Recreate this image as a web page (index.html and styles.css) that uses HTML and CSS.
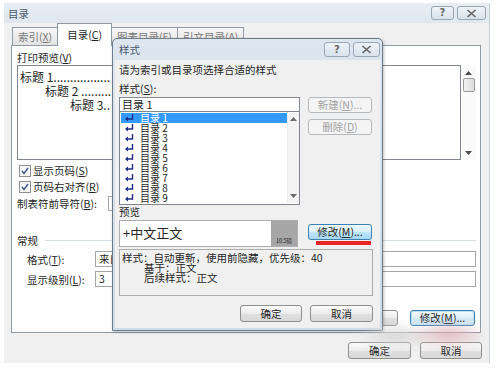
FILE: index.html
```html
<!DOCTYPE html>
<html lang="zh-CN">
<head>
    <meta charset="UTF-8">
    <title>目录</title>
    <link rel="stylesheet" href="styles.css">
</head>
<body>
    <div class="window">
        <div class="titlebar">
            <span class="title">目录</span>
            <div class="caption-buttons">
                <span class="cap-btn help">?</span>
                <span class="cap-btn close">
                    <svg width="11" height="9" viewBox="0 0 11 9"><path d="M1.5 1 L9.5 8 M9.5 1 L1.5 8" stroke="#666" stroke-width="1.6" fill="none"/></svg>
                </span>
            </div>
        </div>

        <div class="tabs">
            <div class="tab">索引(<u>X</u>)</div>
            <div class="tab active">目录(<u>C</u>)</div>
            <div class="tab">图表目录(<u>F</u>)</div>
            <div class="tab">引文目录(<u>A</u>)</div>
        </div>

        <div class="panel">
            <div class="panel-top">
                <div class="col-left">
                    <div class="label">打印预览(<u>V</u>)</div>
                    <div class="print-box">
                        <div class="toc-line">标题 1.................</div>
                        <div class="toc-line lv2">标题 2 .........</div>
                        <div class="toc-line lv3">标题 3..</div>
                    </div>
                    <div class="check">
                        <svg width="12" height="12" viewBox="0 0 12 12"><rect x="0.5" y="0.5" width="11" height="11" fill="#f4f6f8" stroke="#8e8f8f"/><path d="M3 6 L5 8.5 L9 3" fill="none" stroke="#4a5f87" stroke-width="1.6"/></svg>
                        <span>显示页码(<u>S</u>)</span>
                    </div>
                    <div class="check second">
                        <svg width="12" height="12" viewBox="0 0 12 12"><rect x="0.5" y="0.5" width="11" height="11" fill="#f4f6f8" stroke="#8e8f8f"/><path d="M3 6 L5 8.5 L9 3" fill="none" stroke="#4a5f87" stroke-width="1.6"/></svg>
                        <span>页码右对齐(<u>R</u>)</span>
                    </div>
                    <div class="leader">
                        <span class="leader-label">制表符前导符(<u>B</u>):</span>
                        <span class="combo"></span>
                    </div>
                </div>
                <div class="col-right">
                    <div class="label"></div>
                    <div class="web-wrap">
                        <div class="web-box"></div>
                        <div class="web-scroll">
                            <svg width="7" height="4" viewBox="0 0 7 4"><path d="M0 4 L3.5 0 L7 4Z" fill="#4d4d4d"/></svg>
                            <span class="thumb"></span>
                            <span class="spacer"></span>
                            <svg width="7" height="4" viewBox="0 0 7 4"><path d="M0 0 L3.5 4 L7 0Z" fill="#4d4d4d"/></svg>
                        </div>
                    </div>
                </div>
            </div>

            <div class="group-head"><span>常规</span><span class="rule"></span></div>
            <div class="field">
                <span class="field-label">格式(<u>T</u>):</span>
                <span class="combo">来自</span>
            </div>
            <div class="field">
                <span class="field-label">显示级别(<u>L</u>):</span>
                <span class="combo spin">3</span>
            </div>

            <div class="panel-buttons">
                <button class="btn options"></button>
                <button class="btn focused modify-outer">修改(<u>M</u>)...</button>
            </div>
        </div>

        <div class="dialog-buttons">
            <button class="btn ok-outer">确定</button>
            <button class="btn cancel-outer">取消</button>
        </div>
    </div>

    <div class="modal">
        <div class="modal-title">
            <span class="title">样式</span>
            <div class="caption-buttons">
                <span class="cap-btn help wide">?</span>
                <span class="cap-btn close wide">
                    <svg width="11" height="9" viewBox="0 0 11 9"><path d="M1.5 1 L9.5 8 M9.5 1 L1.5 8" stroke="#666" stroke-width="1.6" fill="none"/></svg>
                </span>
            </div>
        </div>
        <div class="modal-body">
            <div class="hint">请为索引或目录项选择合适的样式</div>
            <div class="label gap">样式(<u>S</u>):</div>
            <div class="style-main">
                <div class="style-pick">
                    <div class="style-input">目录 1</div>
                    <div class="style-list">
                        <div class="style-rows">
                            <div class="style-row selected"><svg class="ret" width="9" height="8" viewBox="0 0 9 8"><path d="M7.5 0 V5 H2.5" stroke="#1f2d86" stroke-width="1.4" fill="none"/><path d="M0 5 L3 2.5 L3 7.5Z" fill="#1f2d86"/></svg><span>目录 1</span></div>
                            <div class="style-row"><svg class="ret" width="9" height="8" viewBox="0 0 9 8"><path d="M7.5 0 V5 H2.5" stroke="#1f2d86" stroke-width="1.4" fill="none"/><path d="M0 5 L3 2.5 L3 7.5Z" fill="#1f2d86"/></svg><span>目录 2</span></div>
                            <div class="style-row"><svg class="ret" width="9" height="8" viewBox="0 0 9 8"><path d="M7.5 0 V5 H2.5" stroke="#1f2d86" stroke-width="1.4" fill="none"/><path d="M0 5 L3 2.5 L3 7.5Z" fill="#1f2d86"/></svg><span>目录 3</span></div>
                            <div class="style-row"><svg class="ret" width="9" height="8" viewBox="0 0 9 8"><path d="M7.5 0 V5 H2.5" stroke="#1f2d86" stroke-width="1.4" fill="none"/><path d="M0 5 L3 2.5 L3 7.5Z" fill="#1f2d86"/></svg><span>目录 4</span></div>
                            <div class="style-row"><svg class="ret" width="9" height="8" viewBox="0 0 9 8"><path d="M7.5 0 V5 H2.5" stroke="#1f2d86" stroke-width="1.4" fill="none"/><path d="M0 5 L3 2.5 L3 7.5Z" fill="#1f2d86"/></svg><span>目录 5</span></div>
                            <div class="style-row"><svg class="ret" width="9" height="8" viewBox="0 0 9 8"><path d="M7.5 0 V5 H2.5" stroke="#1f2d86" stroke-width="1.4" fill="none"/><path d="M0 5 L3 2.5 L3 7.5Z" fill="#1f2d86"/></svg><span>目录 6</span></div>
                            <div class="style-row"><svg class="ret" width="9" height="8" viewBox="0 0 9 8"><path d="M7.5 0 V5 H2.5" stroke="#1f2d86" stroke-width="1.4" fill="none"/><path d="M0 5 L3 2.5 L3 7.5Z" fill="#1f2d86"/></svg><span>目录 7</span></div>
                            <div class="style-row"><svg class="ret" width="9" height="8" viewBox="0 0 9 8"><path d="M7.5 0 V5 H2.5" stroke="#1f2d86" stroke-width="1.4" fill="none"/><path d="M0 5 L3 2.5 L3 7.5Z" fill="#1f2d86"/></svg><span>目录 8</span></div>
                            <div class="style-row"><svg class="ret" width="9" height="8" viewBox="0 0 9 8"><path d="M7.5 0 V5 H2.5" stroke="#1f2d86" stroke-width="1.4" fill="none"/><path d="M0 5 L3 2.5 L3 7.5Z" fill="#1f2d86"/></svg><span>目录 9</span></div>
                        </div>
                        <div class="list-scroll">
                            <svg width="7" height="4" viewBox="0 0 7 4"><path d="M0 4 L3.5 0 L7 4Z" fill="#6b6b6b"/></svg>
                            <svg width="7" height="4" viewBox="0 0 7 4"><path d="M0 0 L3.5 4 L7 0Z" fill="#6b6b6b"/></svg>
                        </div>
                    </div>
                </div>
                <div class="side-buttons">
                    <button class="btn" disabled>新建(<u>N</u>)...</button>
                    <button class="btn delete" disabled>删除(<u>D</u>)</button>
                </div>
            </div>

            <div class="label">预览</div>
            <div class="preview-row">
                <div class="preview-box">
                    <span class="preview-text">+中文正文</span>
                    <span class="size-chip">10.5磅</span>
                </div>
                <div class="modify-wrap">
                    <button class="btn hovered">修改(<u>M</u>)...</button>
                    <span class="red-mark"></span>
                </div>
            </div>

            <div class="desc">
                <div>样式：自动更新，使用前隐藏，优先级：40</div>
                <div class="sub">基于：正文</div>
                <div class="sub">后续样式：正文</div>
            </div>

            <div class="modal-actions">
                <button class="btn ok">确定</button>
                <button class="btn cancel">取消</button>
            </div>
        </div>
    </div>

    <div class="watermark"></div>
</body>
</html>
```

FILE: styles.css
```css
* {
    margin: 0;
    padding: 0;
    box-sizing: border-box;
}

body {
    background: #fff;
    color: #262626;
    font-family: "Noto Sans CJK SC", "Noto Sans", sans-serif;
    font-size: 10.5px;
}

u {
    text-decoration: underline;
}

/* outer dialog */
.window {
    width: 486px;
    height: 360px;
    margin: 3px 0 0 4px;
    background: #f0f0f0;
    border-right: 1px solid #c9cfd6;
    display: flex;
    flex-direction: column;
}

.titlebar {
    height: 20px;
    flex: none;
    display: flex;
    align-items: center;
    justify-content: space-between;
    padding: 0 3px 0 4px;
    background: linear-gradient(#e8eef4, #dfe6ee);
    color: #4a5a6a;
}

.caption-buttons {
    display: flex;
    gap: 3px;
}

.cap-btn {
    width: 23px;
    height: 14px;
    border: 1px solid #9aa7b4;
    border-radius: 3px;
    background: linear-gradient(#eef3f8, #d9e2eb);
    display: flex;
    align-items: center;
    justify-content: center;
    color: #6a6a6a;
    font-family: "DejaVu Sans", sans-serif;
    font-size: 10px;
    font-weight: bold;
    line-height: 1;
}

.cap-btn.close {
    width: 29px;
}

.cap-btn.wide {
    width: 26px;
    height: 15px;
}

.cap-btn.close.wide {
    width: 27px;
}

.tabs {
    height: 22px;
    flex: none;
    display: flex;
    align-items: flex-end;
    padding-left: 8px;
}

.tab {
    height: 18px;
    line-height: 17px;
    padding: 0 5px;
    border: 1px solid #8f9aa6;
    border-bottom: none;
    background: linear-gradient(#f6f6f6, #e3e3e3);
    color: #7a7a7a;
    margin-right: -1px;
}

.tab.active {
    height: 23px;
    line-height: 21px;
    margin: 0 -1px -1px 0;
    padding: 0 9px;
    background: #fff;
    color: #262626;
    position: relative;
    z-index: 2;
}

.panel {
    height: 288px;
    flex: none;
    margin: 0 8px 0 7px;
    background: #fff;
    border: 1px solid #8f9aa6;
    padding: 5px 4px 6px 5px;
    display: flex;
    flex-direction: column;
}

.panel-top {
    display: flex;
    gap: 14px;
}

.col-left {
    width: 213px;
}

.col-right {
    width: 232px;
}

.label {
    height: 13px;
    line-height: 13px;
    white-space: nowrap;
}

.print-box {
    margin-top: 1px;
    height: 95px;
    border: 1px solid #828790;
    padding: 4px 0 0 2px;
}

.toc-line {
    font-size: 12px;
    line-height: 14px;
    white-space: nowrap;
}

.toc-line.lv2 {
    margin-left: 25px;
}

.toc-line.lv3 {
    margin-left: 50px;
}

.check {
    height: 13px;
    margin-top: 4px;
    padding-left: 2px;
    display: flex;
    align-items: center;
    gap: 2px;
}

.check.second {
    margin-top: 3px;
}

.leader {
    height: 15px;
    margin-top: 3px;
    display: flex;
    align-items: center;
}

.leader-label {
    width: 91px;
    flex: none;
}

.combo {
    flex: 1;
    height: 15px;
    line-height: 13px;
    padding-left: 3px;
    border: 1px solid #a6a6a6;
    background: #fff;
    white-space: nowrap;
}

.web-wrap {
    margin-top: 1px;
    height: 95px;
    display: flex;
}

.web-box {
    flex: 1;
    border: 1px solid #828790;
}

.web-scroll {
    width: 15px;
    display: flex;
    flex-direction: column;
    align-items: center;
    padding: 6px 0 5px;
    background: #fafafa;
}

.web-scroll .thumb {
    width: 12px;
    height: 14px;
    margin-top: 3px;
    border: 1px solid #9b9b9b;
    border-radius: 2px;
    background: linear-gradient(90deg, #f2f2f2, #dcdcdc);
}

.web-scroll .spacer {
    flex: 1;
}

.group-head {
    height: 13px;
    margin-top: 23px;
    line-height: 13px;
    display: flex;
    align-items: center;
}

.group-head .rule {
    flex: 1;
    margin-left: 7px;
    border-top: 1px solid #d5dde5;
}

.field {
    height: 16px;
    margin-top: 4px;
    padding-left: 10px;
    display: flex;
    align-items: center;
}

.field-label {
    width: 68px;
    flex: none;
}

.field .combo {
    height: 16px;
    line-height: 14px;
}

.panel-buttons {
    margin-top: auto;
    display: flex;
    justify-content: flex-end;
    gap: 12px;
    padding-right: 1px;
}

.dialog-buttons {
    margin-top: 9px;
    padding-right: 7px;
    display: flex;
    justify-content: flex-end;
    gap: 9px;
}

/* buttons */
.btn {
    height: 16px;
    padding: 0;
    border: 1px solid #8e8f8f;
    border-radius: 3px;
    background: linear-gradient(#fbfbfb, #ececec 50%, #e0e0e0 51%, #d8d8d8);
    color: #262626;
    font-family: inherit;
    font-size: 10.5px;
    line-height: 14px;
}

.btn:disabled {
    color: #a3a3a3;
    border-color: #b5b9bc;
    background: #f4f4f4;
}

.btn.focused {
    border-color: #3c7fb1;
    box-shadow: inset 0 0 0 1px #bde3f7;
    background: linear-gradient(#f2f9fd, #e0f0fb 50%, #d4eaf8 51%, #cfe6f6);
}

.btn.hovered {
    border-color: #3c7fb1;
    background: linear-gradient(#eaf6fd, #d9f0fc 50%, #bee6fd 51%, #a7d9f5);
}

.options {
    width: 63px;
}

.modify-outer {
    width: 65px;
}

.ok-outer,
.cancel-outer {
    width: 63px;
    height: 17px;
}

.cancel-outer {
    width: 62px;
}

/* style dialog lying over the outer one */
.modal {
    position: absolute;
    left: 112px;
    top: 38px;
    width: 271px;
    height: 293px;
    border: 1px solid #6d7b8b;
    border-radius: 5px 5px 0 0;
    background: linear-gradient(#dde6ef, #cfdbe7);
    padding: 0 2px 2px;
    display: flex;
    flex-direction: column;
    box-shadow: 1px 1px 3px rgba(0, 0, 0, 0.25);
    z-index: 3;
}

.modal-title {
    height: 21px;
    flex: none;
    display: flex;
    align-items: center;
    justify-content: space-between;
    padding: 0 0 0 4px;
    color: #4a5a6a;
}

.modal-body {
    flex: 1;
    background: #f0f0f0;
    padding: 3px 7px 0 4px;
}

.hint {
    height: 14px;
    line-height: 14px;
}

.label.gap {
    margin-top: 5px;
    height: 14px;
    line-height: 14px;
}

.style-main {
    margin-top: 1px;
    display: flex;
    gap: 8px;
}

.style-pick {
    width: 181px;
}

.style-input {
    height: 15px;
    line-height: 13px;
    padding-left: 2px;
    border: 1px solid #828790;
    background: #fff;
    font-size: 11px;
}

.style-list {
    height: 93px;
    display: flex;
    border: 1px solid #828790;
    border-top: none;
    background: #fff;
    padding: 1px 0 1px 1px;
}

.style-rows {
    flex: 1;
}

.style-row {
    height: 10px;
    line-height: 10px;
    padding-left: 4px;
    display: flex;
    align-items: center;
    gap: 6px;
    font-size: 10px;
    white-space: nowrap;
}

.style-row.selected {
    background: #3399ff;
    color: #fff;
}

.list-scroll {
    width: 12px;
    display: flex;
    flex-direction: column;
    align-items: center;
    justify-content: space-between;
    padding: 4px 0 5px;
    background: #f4f4f4;
    border-left: 1px solid #ececec;
}

.side-buttons {
    width: 64px;
    display: flex;
    flex-direction: column;
}

.side-buttons .btn {
    width: 64px;
}

.side-buttons .delete {
    margin-top: 6px;
}

.preview-row {
    margin-top: 2px;
    display: flex;
    gap: 10px;
}

.preview-box {
    width: 179px;
    height: 27px;
    display: flex;
    border: 1px solid #adadad;
    background: #fff;
}

.preview-text {
    flex: 1;
    padding-left: 3px;
    font-size: 13px;
    line-height: 24px;
}

.size-chip {
    width: 26px;
    display: flex;
    align-items: flex-end;
    justify-content: center;
    padding-bottom: 2px;
    background: #a6a6a6;
    color: #222;
    font-size: 5.5px;
    line-height: 6px;
}

.modify-wrap {
    width: 64px;
    padding-top: 4px;
    display: flex;
    flex-direction: column;
}

.modify-wrap .btn {
    width: 64px;
}

.red-mark {
    width: 55px;
    height: 4px;
    margin: 1px 0 0 8px;
    background: #e52528;
}

.desc {
    margin-top: 2px;
    height: 47px;
    padding: 3px 2px 0;
    border: 1px solid #adadad;
    line-height: 10px;
    white-space: nowrap;
}

.desc .sub {
    padding-left: 22px;
}

.modal-actions {
    margin-top: 9px;
    display: flex;
    justify-content: flex-end;
    gap: 8px;
}

.modal-actions .btn {
    height: 17px;
    width: 63px;
}

.modal-actions .ok {
    width: 62px;
}

/* blurred watermark over the bottom right corner */
.watermark {
    position: absolute;
    left: 362px;
    top: 321px;
    width: 120px;
    height: 30px;
    background:
        radial-gradient(ellipse 40px 14px at 72% 45%, rgba(222, 176, 186, 0.85), transparent),
        radial-gradient(ellipse 40px 14px at 28% 50%, rgba(214, 214, 214, 0.9), transparent);
    filter: blur(3px);
    z-index: 4;
}
```
